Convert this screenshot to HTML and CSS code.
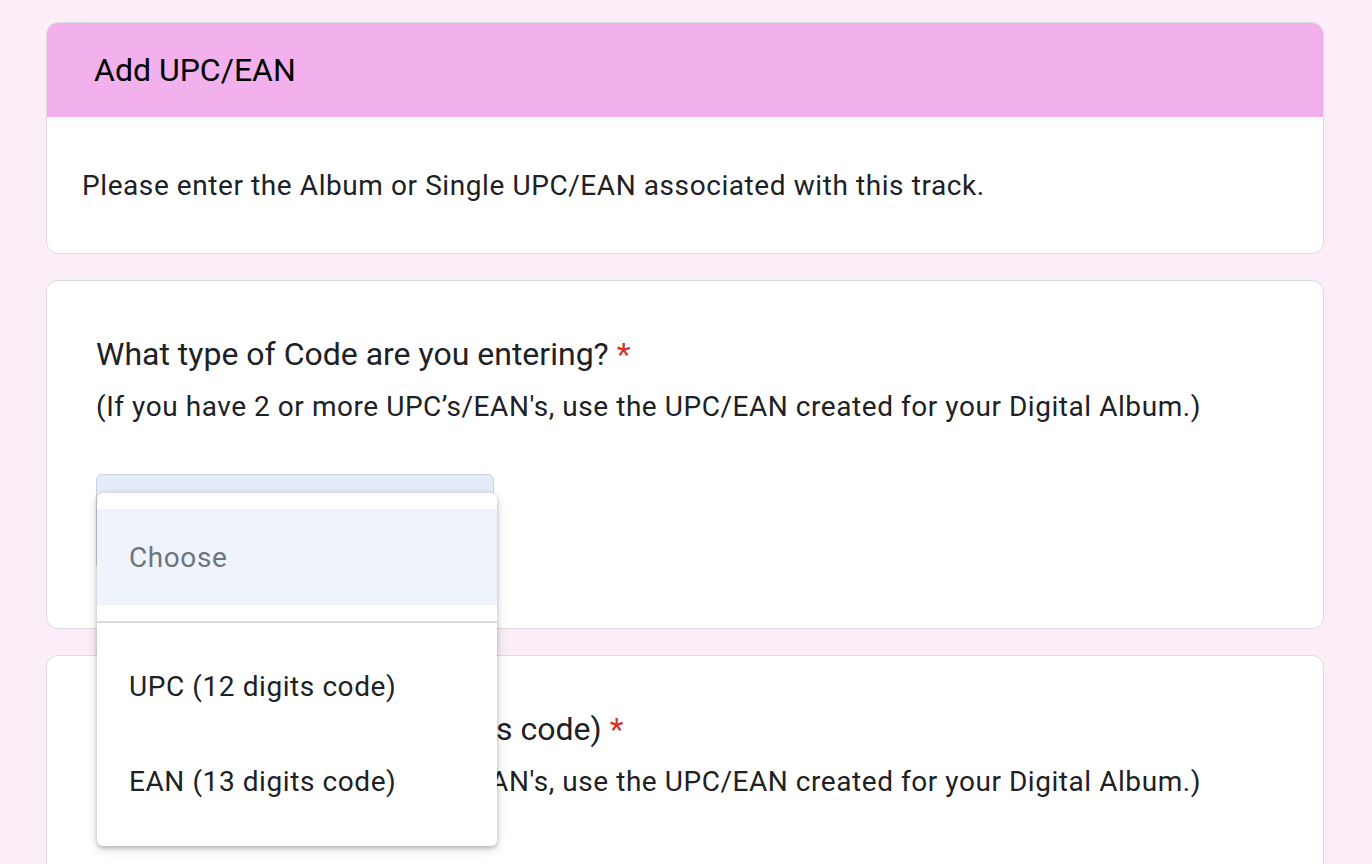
FILE: index.html
```html
<!DOCTYPE html>
<html lang="en">
<head>
<meta charset="utf-8">
<title>Add UPC/EAN</title>
<link rel="stylesheet" href="styles.css">
</head>
<body>
<main class="page">
  <section class="card card-intro">
    <header class="card-header">Add UPC/EAN</header>
    <div class="card-body">
      <p class="intro-text">Please enter the Album or Single UPC/EAN associated with this track.</p>
    </div>
  </section>

  <section class="card card-question card-raised">
    <h2 class="question">What type of Code are you entering? <span class="req">*</span></h2>
    <p class="hint">(If you have 2 or more UPC’s/EAN's, use the UPC/EAN created for your Digital Album.)</p>
    <div class="select-wrap">
      <div class="select-box"></div>
      <ul class="dropdown">
        <li class="option option-placeholder">Choose</li>
        <li class="divider"></li>
        <li class="option">UPC (12 digits code)</li>
        <li class="option">EAN (13 digits code)</li>
      </ul>
    </div>
  </section>

  <section class="card card-question card-last">
    <h2 class="question">UPC/EAN No. (12 or 13 digits code) <span class="req">*</span></h2>
    <p class="hint">(If you have 2 or more UPC’s/EAN's, use the UPC/EAN created for your Digital Album.)</p>
  </section>
</main>
</body>
</html>
```

FILE: styles.css
```css
html, body {
  margin: 0;
  padding: 0;
  overflow: hidden;
  background: #fbeef9;
  font-family: Roboto, "Noto Sans", Arial, sans-serif;
  color: #202124;
}

.page {
  display: flex;
  flex-direction: column;
  gap: 26px;
  padding: 22px 48px 0 46px;
  width: 1278px;
}

.card {
  background: #ffffff;
  border: 1px solid #dadce0;
  border-radius: 12px;
}

.card-intro {
  overflow: hidden;
}

.card-header {
  background: #f2b0ed;
  height: 95px;
  margin: -1px -1px 0 -1px;
  padding-left: 48px;
  display: flex;
  align-items: center;
  font-size: 32px;
  color: #000000;
  line-height: 1;
}

.card-body {
  height: 136px;
  display: flex;
  align-items: center;
  padding-left: 35px;
}

.intro-text {
  margin: 0;
  font-size: 28px;
  letter-spacing: 0.58px;
  line-height: 36px;
  color: #202124;
  padding-top: 2px;
}

.card-question {
  padding: 55px 48px 0 49px;
}

.card-raised {
  position: relative;
  z-index: 2;
  height: 292px;
}

.card-last {
  height: 260px;
}

.question {
  margin: 0;
  font-weight: 400;
  font-size: 32px;
  line-height: 36px;
  color: #202124;
}

.req {
  color: #d93025;
}

.hint {
  margin: 17px 0 0 0;
  font-size: 28px;
  letter-spacing: 0.55px;
  line-height: 36px;
  color: #202124;
}

.select-wrap {
  position: relative;
  margin-top: 49px;
  width: 398px;
}

.select-box {
  height: 96px;
  background: #e4ecf9;
  border: 1px solid #cfd3da;
  border-radius: 6px;
  box-sizing: border-box;
}

.dropdown {
  position: absolute;
  top: 19px;
  left: 1px;
  width: 400px;
  margin: 0;
  padding: 16px 0 17px 0;
  list-style: none;
  background: #ffffff;
  border-radius: 6px;
  box-shadow: 0 2px 4px rgba(0, 0, 0, 0.22), 0 3px 12px rgba(0, 0, 0, 0.14);
}

.option {
  height: 95px;
  display: flex;
  align-items: center;
  padding-left: 32px;
  font-size: 28px;
  letter-spacing: 0.58px;
  color: #202124;
}

.option-placeholder {
  height: 96px;
  background: #eef3fc;
  color: #70757a;
}

.divider {
  height: 2px;
  background: #dadada;
  margin: 16px 0 16px 0;
}
```
